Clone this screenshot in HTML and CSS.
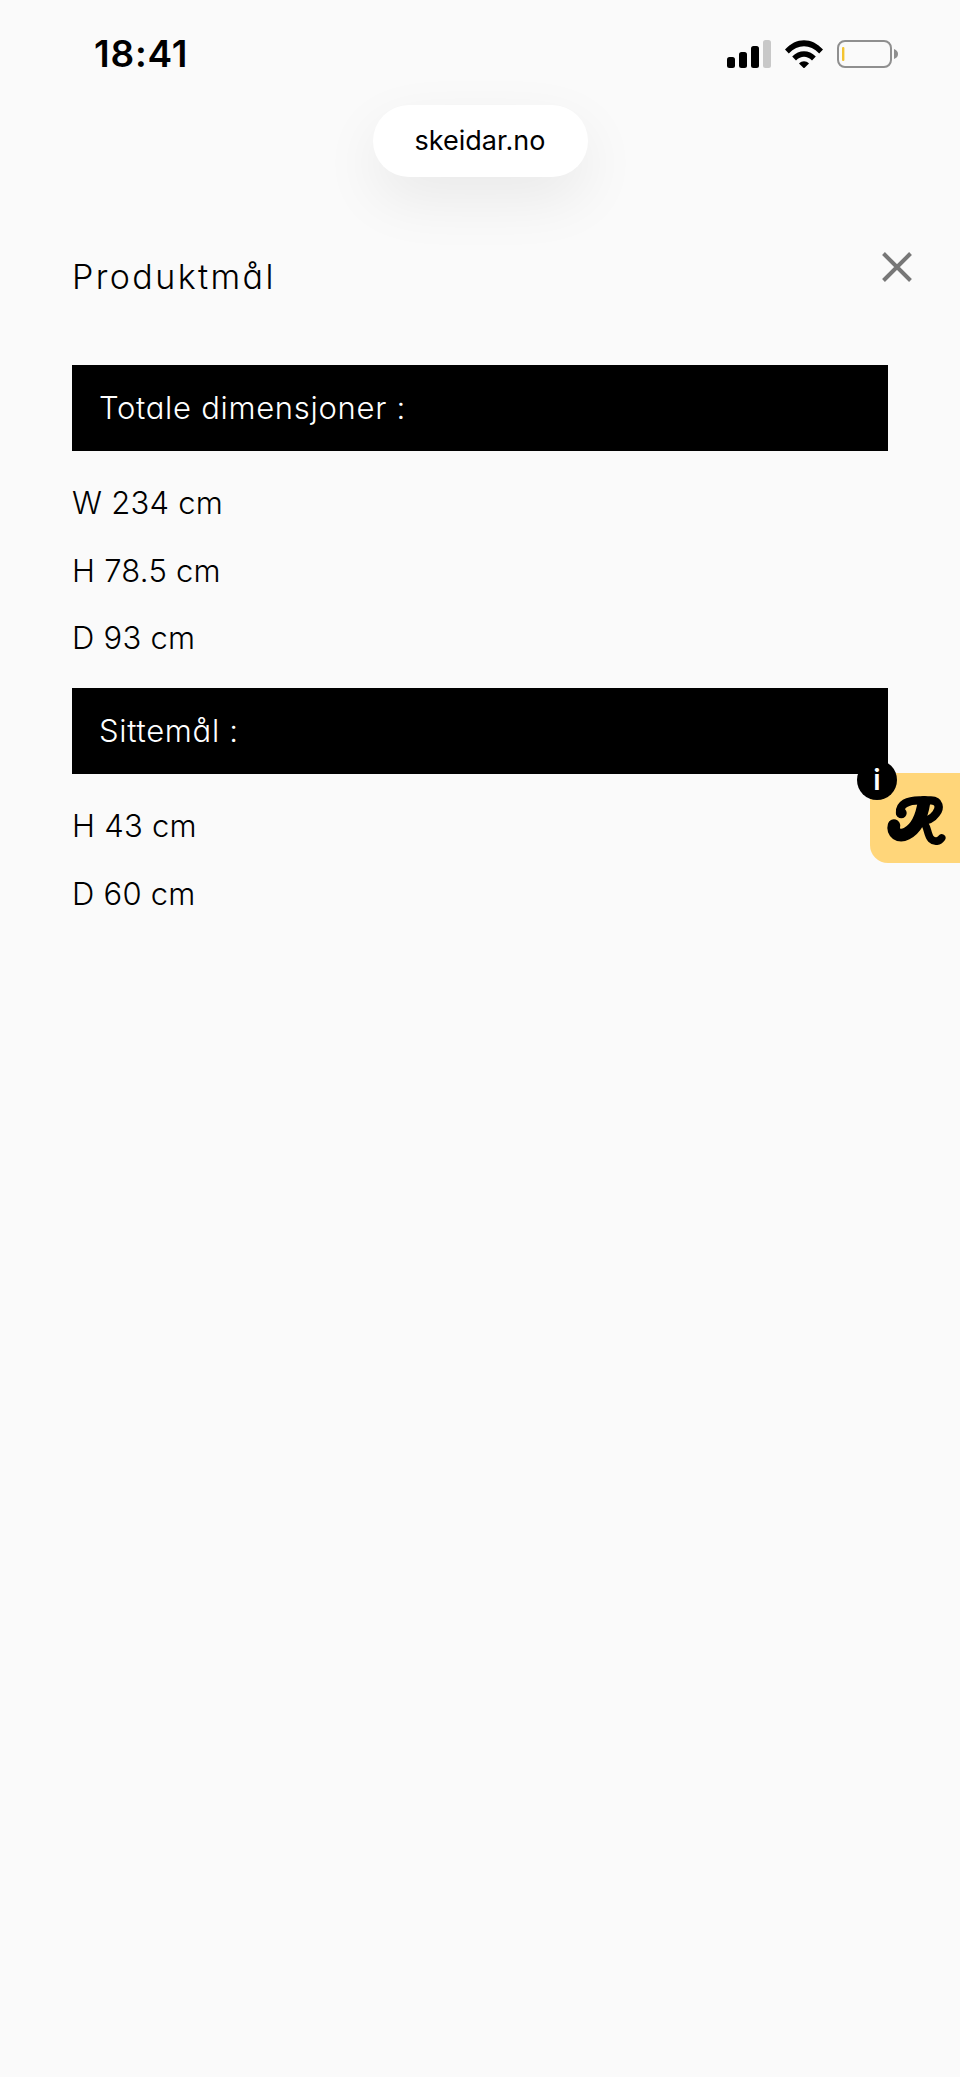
FILE: index.html
```html
<!DOCTYPE html>
<html lang="no">
<head>
<meta charset="utf-8">
<title>Produktmål</title>
<link rel="stylesheet" href="styles.css">
</head>
<body>
<div class="page">
  <header class="status">
    <span class="time">18:41</span>
    <div class="status-icons">
      <svg class="signal" width="44" height="28" viewBox="0 0 44 28">
        <rect x="0" y="17" width="8" height="11" rx="2.5" fill="#000"/>
        <rect x="12" y="12" width="8" height="16" rx="2.5" fill="#000"/>
        <rect x="24" y="6" width="8" height="22" rx="2.5" fill="#000"/>
        <rect x="36" y="0" width="8" height="28" rx="2.5" fill="#c8c8c8"/>
      </svg>
      <svg class="wifi" width="38" height="28" viewBox="0 0 38 28">
        <path d="M0 9.5 C11 -3 27 -3 38 9.5 L34.2 13.4 C25 4 13 4 3.8 13.4 Z" fill="#000"/>
        <path d="M7.2 16.6 C14 9.4 24 9.4 30.8 16.6 L27 20.5 C22 15.6 16 15.6 11 20.5 Z" fill="#000"/>
        <path d="M14 23.4 C17 20.4 21 20.4 24 23.4 L19 28.4 Z" fill="#000"/>
      </svg>
      <svg class="battery" width="62" height="28" viewBox="0 0 62 28">
        <rect x="1" y="1" width="53" height="26" rx="7" fill="none" stroke="#8f8f8f" stroke-width="2"/>
        <rect x="5" y="7" width="2.4" height="14" rx="1" fill="#f4c430"/>
        <path d="M57 9 C60 10 61 12 61 14 C61 16 60 18 57 19 Z" fill="#8f8f8f"/>
      </svg>
    </div>
  </header>

  <div class="address">
    <div class="address-pill">skeidar.no</div>
  </div>

  <main class="panel">
    <div class="panel-head">
      <h1 class="panel-title">Produktmål</h1>
      <svg class="close" width="30" height="30" viewBox="0 0 30 30">
        <path d="M1.5 1.5 L28.5 28.5 M28.5 1.5 L1.5 28.5" stroke="#777" stroke-width="4" fill="none"/>
      </svg>
    </div>

    <section class="group">
      <h2 class="group-title">Totale dimensjoner :</h2>
      <ul class="dims">
        <li>W 234 cm</li>
        <li>H 78.5 cm</li>
        <li>D 93 cm</li>
      </ul>
    </section>

    <section class="group">
      <h2 class="group-title">Sittemål :</h2>
      <ul class="dims">
        <li>H 43 cm</li>
        <li>D 60 cm</li>
      </ul>
    </section>
  </main>

  <aside class="badge">
    <svg class="badge-logo" width="60" height="57" viewBox="200 150 180 171">
      <path d="M242 222 C240 196 265 184 300 184 L335 184 C360 184 364 207 350 224 C340 238 322 246 305 246" fill="none" stroke="#000" stroke-width="25" stroke-linecap="round"/>
      <circle cx="246" cy="222" r="16" fill="#000"/>
      <path d="M314 190 C308 228 294 268 262 284 C238 296 218 280 224 260" fill="none" stroke="#000" stroke-width="38" stroke-linecap="round"/>
      <path d="M308 246 C326 256 322 286 335 300 C346 311 360 307 367 297" fill="none" stroke="#000" stroke-width="23" stroke-linecap="round"/>
    </svg>
    <span class="badge-info">i</span>
  </aside>
</div>
</body>
</html>
```
FILE: styles.css
```css
* { box-sizing: border-box; }

html, body {
  margin: 0;
  padding: 0;
  background: #fafafa;
}

.page {
  position: relative;
  width: 960px;
  height: 2077px;
  overflow: hidden;
  background: #fafafa;
  font-family: Inter, Lato, "Liberation Sans", sans-serif;
  font-feature-settings: "cv11" 1;
  color: #000;
}

.status {
  display: flex;
  justify-content: space-between;
  align-items: center;
  height: 108px;
  padding: 0 61px 0 94px;
  font-feature-settings: normal;
}

.time {
  font-family: Inter, sans-serif;
  font-weight: 600;
  font-size: 37px;
  letter-spacing: 0.8px;
  line-height: 108px;
}

.status-icons {
  display: flex;
  align-items: center;
  gap: 14px;
}

.address {
  display: flex;
  justify-content: center;
  height: 0;
}

.address-pill {
  width: 215px;
  height: 72px;
  margin-top: -3px;
  border-radius: 36px;
  background: #fff;
  box-shadow: 0 22px 60px rgba(0, 0, 0, 0.07);
  font-family: Inter, sans-serif;
  font-feature-settings: normal;
  font-weight: 400;
  font-size: 27px;
  line-height: 72px;
  text-align: center;
}

.panel {
  display: flex;
  flex-direction: column;
  padding: 142px 72px 0;
}

.panel-head {
  display: flex;
  justify-content: space-between;
  align-items: flex-start;
  height: 115px;
  margin-right: -24px;
}

.panel-title {
  margin: 3px 0 0;
  font-weight: 300;
  font-size: 34px;
  letter-spacing: 2.4px;
  line-height: 48px;
}

.close {
  display: block;
  margin-top: 2px;
}

.group-title {
  margin: 0;
  height: 85.5px;
  padding-left: 27px;
  background: #000;
  color: #fff;
  font-weight: 300;
  font-size: 31px;
  letter-spacing: 0.7px;
  line-height: 86px;
}

.dims {
  margin: 0;
  padding: 18.5px 0 16.5px;
  list-style: none;
}

.dims li {
  height: 67.5px;
  font-weight: 300;
  font-size: 31px;
  letter-spacing: 0.25px;
  line-height: 67.5px;
}

.badge {
  position: absolute;
  left: 870px;
  top: 773px;
  width: 90px;
  height: 90px;
  background: #ffd67a;
  border-radius: 0 0 0 18px;
}

.badge-logo {
  position: absolute;
  left: 16px;
  top: 16px;
}

.badge-info {
  position: absolute;
  left: -13px;
  top: -13px;
  width: 40px;
  height: 40px;
  border-radius: 50%;
  background: #000;
  color: #fff;
  font-family: Inter, sans-serif;
  font-feature-settings: normal;
  font-weight: 600;
  font-size: 28px;
  line-height: 40px;
  text-align: center;
}
```
